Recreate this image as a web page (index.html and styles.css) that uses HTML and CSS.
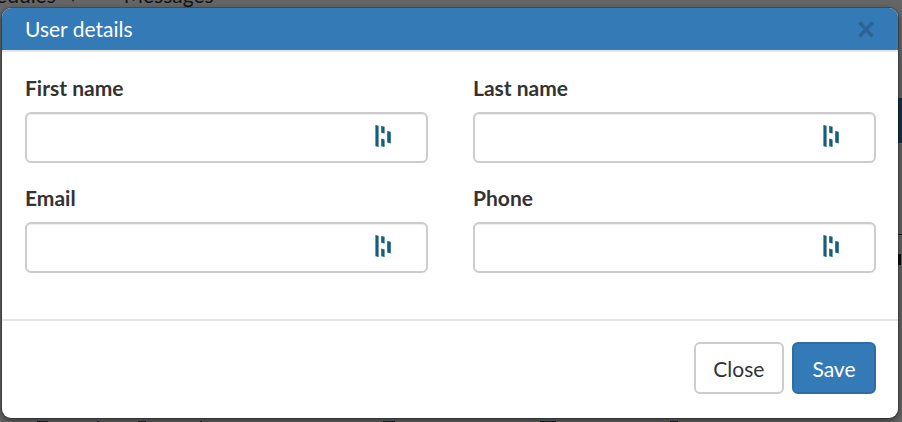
FILE: index.html
```html
<!DOCTYPE html>
<html lang="en">
<head>
<meta charset="utf-8">
<title>User details</title>
<link rel="stylesheet" href="styles.css">
</head>
<body>
<div class="page">
  <nav class="topnav"><span class="nav-a">Schedules</span><span class="nav-caret">▾</span><span class="nav-b">Messages</span></nav>
  <div class="side-strip"></div>
  <div class="side-marks"></div>
  <div class="bottom-marks"></div>
</div>
<div class="backdrop"></div>
<div class="dialog">
  <header class="dialog-head">
    <h1 class="dialog-title">User details</h1>
    <svg class="close-x" viewBox="0 0 16 17" aria-label="Close"><path d="M1.5 1.5 14.5 15.5M14.5 1.5 1.5 15.5"/></svg>
  </header>
  <form class="dialog-body">
    <div class="field">
      <label class="field-label">First name</label>
      <div class="input"><svg class="pm-icon" viewBox="0 0 16 22"><use href="#pm"/></svg></div>
    </div>
    <div class="field">
      <label class="field-label">Last name</label>
      <div class="input"><svg class="pm-icon" viewBox="0 0 16 22"><use href="#pm"/></svg></div>
    </div>
    <div class="field">
      <label class="field-label">Email</label>
      <div class="input"><svg class="pm-icon" viewBox="0 0 16 22"><use href="#pm"/></svg></div>
    </div>
    <div class="field">
      <label class="field-label">Phone</label>
      <div class="input"><svg class="pm-icon" viewBox="0 0 16 22"><use href="#pm"/></svg></div>
    </div>
  </form>
  <footer class="dialog-foot">
    <button class="btn btn-plain" type="button">Close</button>
    <button class="btn btn-primary" type="button">Save</button>
  </footer>
</div>
<svg class="defs" width="0" height="0">
  <defs>
    <g id="pm" fill="#175f76">
      <path d="M.4 0 3.6.8V22L.4 21.2Z"/>
      <path d="M6.2 1 9.6 1.8V8.6L6.2 7.8Z"/>
      <path d="M6.2 13.6 9.6 14.4V22L6.2 21.2Z"/>
      <path d="M12.2 6 15.8 6.8V18.4L12.2 17.6Z"/>
    </g>
  </defs>
</svg>
</body>
</html>
```
FILE: styles.css
```css
html, body {
  margin: 0;
  height: 100%;
  overflow: hidden;
}
body {
  position: relative;
  width: 902px;
  height: 422px;
  background: #fff;
  font-family: Lato, "Liberation Sans", sans-serif;
  color: #333;
}
.page {
  position: absolute;
  inset: 0;
}
.topnav {
  display: flex;
  margin-top: -17px;
  margin-left: -37px;
  font-size: 21px;
  line-height: 24px;
  color: #333;
}
.nav-caret {
  margin-top: 3px;
  margin-left: 14px;
  font-size: 12px;
}
.nav-b {
  margin-left: 48px;
}
.side-strip {
  position: absolute;
  top: 98px;
  right: 0;
  width: 4px;
  height: 45px;
  background: #337ab7;
}
.side-marks {
  position: absolute;
  top: 234px;
  right: 0;
  width: 4px;
  height: 32px;
  background:
    linear-gradient(#333, #333) 0 0 / 4px 1px no-repeat,
    linear-gradient(#222, #222) 0 20px / 3px 11px no-repeat;
}
.bottom-marks {
  position: absolute;
  left: 0;
  right: 0;
  bottom: 0;
  height: 1px;
  background:
    linear-gradient(#456, #456) 37px 0 / 11px 1px no-repeat,
    linear-gradient(#456, #456) 97px 0 / 2px 1px no-repeat,
    linear-gradient(#456, #456) 138px 0 / 8px 1px no-repeat,
    linear-gradient(#456, #456) 200px 0 / 2px 1px no-repeat,
    linear-gradient(#456, #456) 383px 0 / 12px 1px no-repeat,
    linear-gradient(#456, #456) 540px 0 / 16px 1px no-repeat,
    linear-gradient(#1c4f86, #1c4f86) 670px 0 / 8px 1px no-repeat;
}
.backdrop {
  position: absolute;
  inset: 0;
  background: rgba(0, 0, 0, 0.6);
}
.dialog {
  position: absolute;
  left: 2px;
  top: 8px;
  width: 896px;
  height: 410px;
  display: flex;
  flex-direction: column;
  background: #fff;
  border-radius: 9px;
  box-shadow: 0 0 0 1px rgba(0, 0, 0, 0.2), 0 3px 9px rgba(0, 0, 0, 0.5);
}
.dialog-head {
  flex: none;
  box-sizing: border-box;
  height: 44px;
  padding: 0 23px;
  display: flex;
  align-items: center;
  justify-content: space-between;
  background: #337ab7;
  background-clip: padding-box;
  border-bottom: 2px solid #e5e5e5;
  border-radius: 9px 9px 0 0;
}
.dialog-title {
  margin: 0;
  font-size: 21px;
  font-weight: 400;
  line-height: 24px;
  color: #fff;
}
.close-x {
  width: 16px;
  height: 17px;
  margin-right: 1px;
  fill: none;
  stroke: #2b6596;
  stroke-width: 3.4;
}
.dialog-body {
  flex: 1;
  display: grid;
  grid-template-columns: 403px 403px;
  column-gap: 45px;
  row-gap: 23.5px;
  align-content: start;
  padding: 24px 23px 0;
}
.field-label {
  display: block;
  margin-bottom: 12px;
  font-size: 21px;
  font-weight: 700;
  line-height: 24px;
  color: #333;
}
.input {
  box-sizing: border-box;
  height: 50.5px;
  padding-right: 35px;
  display: flex;
  align-items: center;
  justify-content: flex-end;
  border: 2px solid #ccc;
  border-radius: 6px;
  background: #fff;
  box-shadow: inset 0 1px 1px rgba(0, 0, 0, 0.075);
}
.pm-icon {
  width: 16px;
  height: 22px;
  margin-bottom: 3px;
}
.dialog-foot {
  flex: none;
  box-sizing: border-box;
  height: 99px;
  padding: 21px 22px 0;
  display: flex;
  justify-content: flex-end;
  gap: 8px;
  border-top: 2px solid #e5e5e5;
}
.btn {
  box-sizing: border-box;
  height: 52px;
  padding: 0 17.5px;
  border: 2px solid #ccc;
  border-radius: 6px;
  background: #fff;
  font-family: inherit;
  font-size: 21px;
  color: #333;
}
.btn-primary {
  padding: 0 18.5px;
  background: #337ab7;
  border-color: #2e6da4;
  color: #fff;
}
.defs {
  position: absolute;
}
```
